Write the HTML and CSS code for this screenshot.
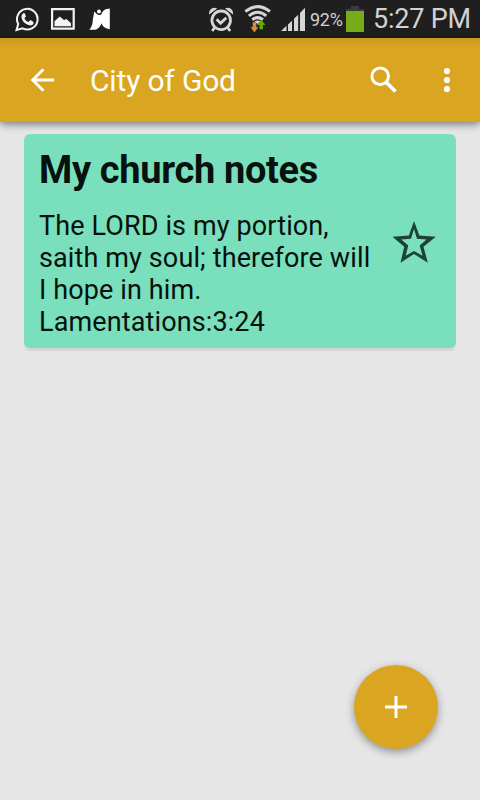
FILE: index.html
```html
<!DOCTYPE html>
<html lang="en">
<head>
<meta charset="utf-8">
<title>City of God</title>
<link rel="stylesheet" href="styles.css">
</head>
<body>
<div class="status">
  <div class="status-group">
    <svg width="24" height="26" viewBox="15 6 24 26"><path d="M16.500 30l1.700-6A10.300 10.300 0 1 1 22.500 28.300z" fill="none" stroke="#f2f2f2" stroke-width="2"/><path d="M23.200 13.200c-4 2.700-.7 11.300 7.300 12.200 2.700-.3 3.500-2.100 3-3.500l-3-1.900-2.100 2c-2.200-.9-3.500-2.300-4-4.100l1.600-1.500-1.200-3.200z" fill="#f2f2f2"/></svg>
    <svg width="24" height="26" viewBox="51 6 24 26"><path d="M52.100 9.100h21.600v19.500H52.100z" fill="none" stroke="#f2f2f2" stroke-width="2.200"/><path d="M54.500 26.300v-5l5.200-4.800 4.300 3.500 2.500-1 4.500 4.200v3.100z" fill="#f2f2f2"/></svg>
    <svg width="22" height="26" viewBox="89 6 22 26"><path d="M94.200 11.500c1.600 1 2.600 2.900 4.300 3.500 1.500.3 2.600 0 3.200-1.500 1.500-3.500 4-4.700 8.100-5v20.700c-4.500-.5-7.200-3-8.300-6-1 3-3.500 6-6.500 6.500H89.200c2-2 3.600-5.500 3.600-9.700z" fill="#fff"/><circle cx="99" cy="11.500" r="1.900" fill="#fff"/></svg>
  </div>
  <div class="status-group">
    <svg width="26" height="27" viewBox="208 6 26 27"><g fill="none" stroke="#d6d6d6" stroke-width="2.800"><circle cx="221.200" cy="20.300" r="9.300"/><path d="M216.600 19.200l4 4 5.700-5.500M214.800 27.500l-2.600 3.500M227.600 27.500l2.600 3.500"/></g><path d="M209.200 14.500c-1-5 4-8.500 8-6zM233 14.500c1-5-4-8.500-8-6z" fill="#d6d6d6"/></svg>
    <svg class="wifi" width="28" height="28" viewBox="244 5 28 28"><g fill="none" stroke="#d6d6d6" stroke-width="3"><path d="M245.300 11.500q12.300-9.800 24.600 0M248.900 15.800q8.700-7 17.400 0M252.300 19.700q5.300-4.200 10.600 0"/></g><path d="M254.500 21.500q3.100-1.800 6.200 0l-3.100 2.500z" fill="#d6d6d6"/><path d="M252.700 22.300h3.600v5h2l-3.900 5.200-3.800-5.200h2.100z" fill="#dc8d35"/><path d="M261.200 19.500l4.200 5.500h-2.400v4.200h-3.500V25h-2.400z" fill="#67a800"/></svg>
    <svg class="signal" width="25" height="26" viewBox="281 6 25 26"><path d="M281 31l5.500-5.200V31zM288 24.500l4-3.800V31h-4zM294 18.700l4.200-4V31H294zM300 13l5-5.200V31h-5z" fill="#d6d6d6"/></svg>
    <span class="percent">92%</span>
    <svg width="18" height="27" viewBox="346 6 18 27"><path d="M346 9h5V6h8v3h5v2h-18z" fill="#3b3b3b"/><path d="M346 11h18v21h-18z" fill="#77ab19"/></svg>
    <span class="clock">5:27 PM</span>
  </div>
</div>
<header class="bar">
  <svg width="26" height="26" viewBox="29 67 26 26"><path d="M43.500 69.200L32.700 80l10.800 10.800M32 80h22" fill="none" stroke="#fff" stroke-width="2.900"/></svg>
  <h1 class="title">City of God</h1>
  <svg width="28" height="28" viewBox="370 66 28 28"><circle cx="380.200" cy="76.200" r="8.300" fill="none" stroke="#fff" stroke-width="3"/><path d="M386 82l9.500 9.500" stroke="#fff" stroke-width="3.800"/></svg>
  <svg class="more" width="8" height="26" viewBox="443 67 8 26" fill="#fff"><circle cx="447" cy="71" r="3.100"/><circle cx="447" cy="80" r="3.100"/><circle cx="447" cy="89" r="3.100"/></svg>
</header>
<main class="content">
  <article class="card">
    <h2 class="heading">My church notes</h2>
    <div class="row">
      <p class="verse">The LORD is my portion,<br>saith my soul; therefore will<br>I hope in him.<br>Lamentations:3:24</p>
      <svg class="star" width="44" height="42" viewBox="392.500 220.500 44 42"><path fill="#1e4236" fill-rule="evenodd" d="M414.500 220.500l5.300 14.500 16.500 1.200-12.300 10 4.300 16-13.800-8.700-13.500 8.700 3.700-16-11.700-10 16.400-1.200zM414.500 228.500l-3 9.800-9.700.6 7 6-2.600 10.300 8.300-4.800 8.500 4.800-2.800-10.300 6.800-6-9.500-.6z"/></svg>
    </div>
  </article>
</main>
<div class="fab"><svg width="22" height="22" viewBox="0 0 22 22"><path d="M11 0v22M0 11h22" stroke="#fff" stroke-width="3"/></svg></div>
</body>
</html>
```
FILE: styles.css
```css
* { box-sizing: border-box; }
html, body { height: 100%; }
body {
  margin: 0;
  background: #e6e6e6;
  font-family: Roboto, "Liberation Sans", sans-serif;
  overflow: hidden;
}
svg { display: block; flex: none; }
.status {
  height: 38px;
  padding: 6px 9px 0 15px;
  display: flex;
  justify-content: space-between;
  background: #1f1f1f;
  color: #d2d2d2;
}
.status-group { display: flex; align-items: flex-start; white-space: nowrap; }
.status-group:first-child { gap: 12px; }
.status-group:first-child svg:last-child { margin-left: 2px; }
.wifi { margin: -1px 0 0 10px; }
.signal { margin-left: 9px; }
.percent { width: 36px; margin-left: 4px; font-size: 18px; line-height: 27px; letter-spacing: -0.3px; }
.clock { width: 98px; margin-left: 9px; font-size: 27px; line-height: 26px; letter-spacing: -0.2px; }
.bar {
  position: relative;
  height: 84px;
  padding: 0 29px;
  display: flex;
  align-items: center;
  background: linear-gradient(#c99820 0, #d4a021 5px, #daa520 12px);
  box-shadow: 0 2px 8px rgba(0, 0, 0, .5);
}
.title {
  flex: 1;
  margin: 0 0 0 35px;
  padding-top: 1px;
  color: #fff;
  font-weight: 400;
  font-size: 30px;
  line-height: 37px;
  letter-spacing: -0.17px;
}
.more { margin-left: 45px; }
.content { padding: 12px 24px; }
.card {
  position: relative;
  height: 214px;
  padding: 14px 20px 0 15px;
  border-radius: 6px;
  background: #79dfbc;
  box-shadow: 0 3px 1px rgba(0, 0, 0, .07);
  color: #07110d;
}
.heading { margin: 0; font-size: 38px; line-height: 44px; font-weight: 700; letter-spacing: -0.33px; white-space: nowrap; }
.row { display: flex; justify-content: space-between; padding-top: 18px; }
.verse { margin: 0; font-size: 27px; line-height: 32px; letter-spacing: 0.12px; white-space: nowrap; }
.star { margin-top: 10.5px; }
.fab {
  position: fixed;
  left: 354px;
  top: 665px;
  width: 84px;
  height: 84px;
  border-radius: 50%;
  display: flex;
  align-items: center;
  justify-content: center;
  background: #daa520;
  box-shadow: 0 3px 8px rgba(0, 0, 0, .38);
}
```
